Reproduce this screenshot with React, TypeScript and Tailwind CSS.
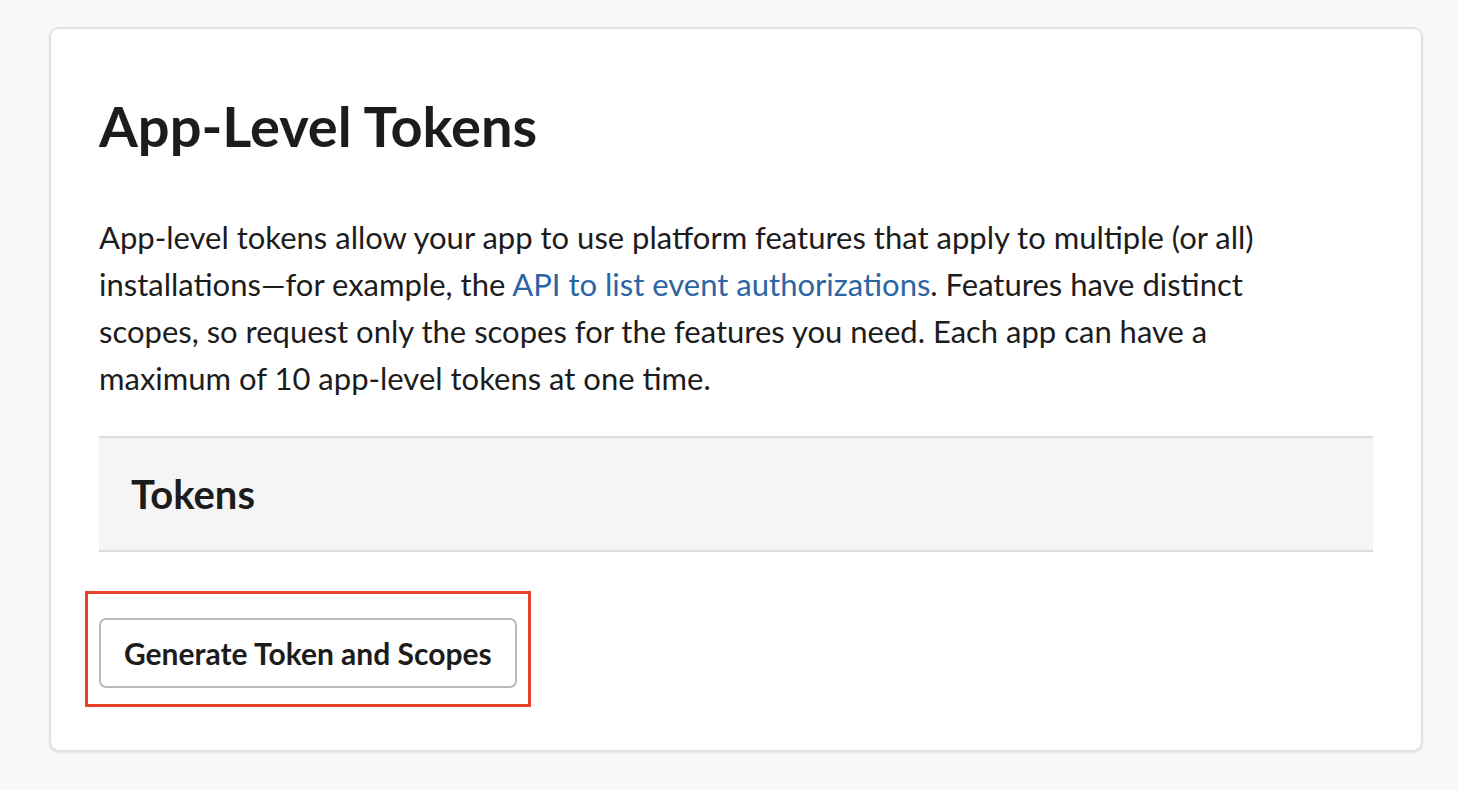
export default function App() {
  return (
    <div className="min-h-[790px] bg-[#f8f8f8] pt-[27px] pl-[49px] font-['Lato','Open_Sans',sans-serif] text-[#1d1c1d]">
      <div className="w-[1374px] rounded-[10px] border-2 border-[#e2e2e2] bg-white px-[48px] pt-[62px] pb-[43px] shadow-[0_1px_2px_rgba(0,0,0,0.08)]">
        <h1 className="text-[56px] font-bold leading-[70px]">App-Level Tokens</h1>
        <p className="mt-[53px] max-w-[1190px] text-[31px] leading-[47px]">
          App-level tokens allow your app to use platform features that apply to multiple (or all)
          installations—for example, the{" "}
          <a href="#" className="text-[#2b65a3]">
            API to list event authorizations
          </a>
          . Features have distinct scopes, so request only the scopes for the features you need.
          Each app can have a maximum of 10 app-level tokens at one time.
        </p>
        <div className="mt-[34px] border-y-2 border-[#dddddd] bg-[#f5f5f5] px-[32px] py-[31px]">
          <h2 className="text-[40px] font-bold leading-[50px]">Tokens</h2>
        </div>
        <div className="mt-[39px] -ml-[14px] inline-block border-[3px] border-[#e8412a] px-[11px] pt-[24px] pb-[16px]">
          <button className="h-[70px] rounded-[7px] border-2 border-[#bbbbbb] bg-white px-[23px] text-[30px] font-bold text-[#1d1c1d]">
            Generate Token and Scopes
          </button>
        </div>
      </div>
    </div>
  );
}
